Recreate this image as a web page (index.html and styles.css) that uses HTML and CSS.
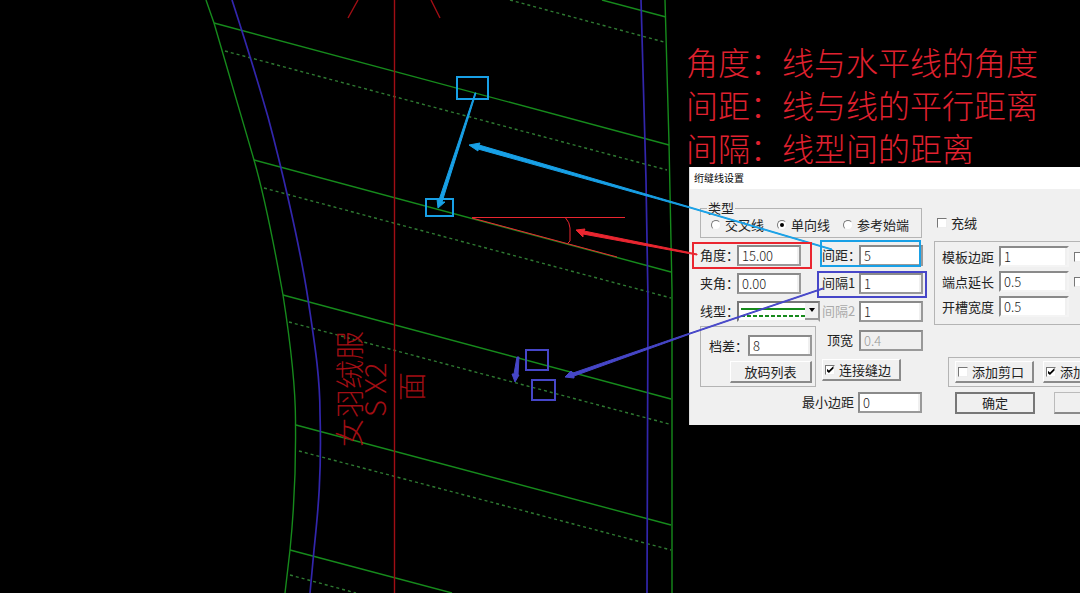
FILE: index.html
```html
<!DOCTYPE html>
<html lang="zh-CN">
<head>
<meta charset="utf-8">
<title>绗缝线设置</title>
<link rel="stylesheet" href="styles.css">
</head>
<body>
<main class="stage">
  <svg class="drawing" aria-hidden="true">
    <g class="seam">
      <path d="M206 0L214 23C234 92 244 125 254 160C266 202 275 250 283 295C290 340 296 385 295.500 425C296 470 293 520 290 550L285 593"/>
      <path d="M665 0L669 143L672 290V593"/>
      <path d="M602 0L666 17M214 23L669 145M254 160L671 272M283 295L671 399M296 425L671 525M290 550L452 593"/>
    </g>
    <path class="seam dashed" d="M510 0L664 42M225 51L667 170M264 188L671 298M289 322L669 424M299 451L671 550M290 575L356 593"/>
    <path class="edge" d="M232 0C245 40 258 82 268 117C279 158 299 240 308 299C314 340 320 375 320 413C322 480 317 520 314 550L310 593M641 0L646 180L648 300L647 593"/>
    <path class="axis" d="M394.500 0V593M358 0L348 18M431 0L440 18"/>
    <g class="piece-label">
      <text transform="translate(361 447) rotate(-90)">女羽绒服</text>
      <text transform="translate(386 417) rotate(-90)">S X2</text>
      <text transform="translate(423 401) rotate(-90)">面</text>
    </g>
  </svg>

  <div class="side">
    <section class="notes">
      <p>角度：线与水平线的角度</p>
      <p>间距：线与线的平行距离</p>
      <p>间隔：线型间的距离</p>
    </section>

    <form class="dialog">
      <h1 class="title">绗缝线设置</h1>
      <div class="body">
        <div class="main-col">
          <fieldset class="types">
            <legend>类型</legend>
            <label><input class="radio" type="radio" name="type">交叉线</label>
            <label><input class="radio" type="radio" name="type" checked>单向线</label>
            <label><input class="radio" type="radio" name="type">参考始端</label>
          </fieldset>
          <div class="pair">
            <div class="stack">
              <div class="row"><label class="name" for="angle">角度：</label><input class="field" id="angle" value="15.00"></div>
              <div class="row"><label class="name" for="clip">夹角：</label><input class="field" id="clip" value="0.00"></div>
              <div class="row"><label class="name" for="line">线型：</label>
                <div class="combo">
                  <svg class="sample" aria-hidden="true"><path d="M2 6H68"/><path class="dots" d="M2 13H68"/></svg>
                  <select class="select" id="line"><option aria-label="实线与虚线"></option></select>
                  <span class="drop"></span>
                </div>
              </div>
              <div class="group grade">
                <div class="grade-row"><label for="grade">档差：</label><input class="field" id="grade" value="8"></div>
                <button class="button" type="button">放码列表</button>
              </div>
            </div>
            <div class="stack">
              <div class="row"><label class="name" for="dist">间距：</label><input class="field" id="dist" value="5"></div>
              <div class="row"><label class="name" for="gap1">间隔1</label><input class="field" id="gap1" value="1"></div>
              <div class="row"><label class="name muted" for="gap2">间隔2</label><input class="field" id="gap2" value="1"></div>
              <div class="row tall"><label class="name indent" for="top">顶宽</label><input class="field" id="top" value="0.4" disabled></div>
              <div class="row tall"><label class="button check-button"><input class="check" type="checkbox" checked>连接缝边</label></div>
            </div>
          </div>
          <div class="row tall end"><label for="min">最小边距</label><input class="field" id="min" value="0"></div>
        </div>

        <div class="extra-col">
          <label class="fill"><input class="check" type="checkbox">充绒</label>
          <div class="group margins">
            <div class="row"><label for="m1">模板边距</label><input class="field wide" id="m1" value="1"><input class="check" type="checkbox" aria-label="模板边距选项"></div>
            <div class="row"><label for="m2">端点延长</label><input class="field wide" id="m2" value="0.5"><input class="check" type="checkbox" aria-label="端点延长选项"></div>
            <div class="row"><label for="m3">开槽宽度</label><input class="field wide" id="m3" value="0.5"></div>
          </div>
          <div class="group notches">
            <label class="button check-button"><input class="check" type="checkbox">添加剪口</label>
            <label class="button check-button"><input class="check" type="checkbox" checked>添加</label>
          </div>
          <div class="actions">
            <button class="button default" type="button">确定</button>
            <button class="button" type="button" aria-label="取消"></button>
          </div>
        </div>
      </div>
    </form>
  </div>

  <svg class="drawing marks" aria-hidden="true">
    <g class="cyan">
      <path class="box" d="M457 77H488V99H457ZM426 199H453V216H426Z"/>
      <path class="box" d="M821 241H920V266H821Z"/>
      <path d="M475 93L476 93L442 202L445 202L438 208L437 199L439 200Z"/>
      <path d="M469 145L480 143L479 145L690 207L832 249V250L690 208L478 149V151Z"/>
    </g>
    <g class="red">
      <path class="box" d="M693 243H811V268H693Z"/>
      <path class="thin" d="M472 217.500H625M472 218L617 257M565 217Q570 223 570 228V241L568 243"/>
      <path d="M576 230L585 229L584 231L697 254V255L583 234V237Z"/>
    </g>
    <g class="blue">
      <path class="box" d="M818 272H926V297H818ZM526 350H548V370H526ZM532 380H555V400H532Z"/>
      <path d="M565 377L571 371L573 373L690 333L823 288V289L690 334L574 376V378Z"/>
      <path d="M517 357H519L518 375H519L515 382L512 374H514Z"/>
    </g>
  </svg>
</main>
</body>
</html>
```

FILE: styles.css
```css
* { box-sizing: border-box; }
body {
  margin: 0;
  background: #000;
  color: #222;
  font: 400 13px/16px "Noto Sans CJK SC", sans-serif;
}
input, button, select { font: inherit; color: inherit; margin: 0; }

.stage {
  position: relative;
  min-height: 100vh;
  overflow: hidden;
}
.drawing {
  position: absolute;
  inset: 0;
  width: 100%;
  height: 100%;
  fill: none;
}
.marks { pointer-events: none; }
.seam { stroke: #168a1c; stroke-width: 1.4; }
.dashed { stroke: #2f7a32; stroke-dasharray: 3 3; }
.edge { stroke: #3226ac; stroke-width: 1.7; }
.axis { stroke: #a00e14; stroke-width: 1.4; }
.piece-label { fill: #a00e14; font-size: 29px; font-weight: 200; }

.cyan { fill: #18a0e6; stroke: #18a0e6; }
.red { fill: #ea2630; stroke: #ea2630; }
.blue { fill: #4646c8; stroke: #4646c8; }
.marks path { stroke-width: 1; }
.marks .box { fill: none; stroke-width: 2; }
.marks .thin { fill: none; }

.side { padding: 40px 0 0 689px; }
.notes {
  height: 127px;
  color: #e0212f;
  font-size: 32px;
  font-weight: 300;
  line-height: 43px;
  white-space: nowrap;
}
.notes p { margin: 0 0 0 -3px; }

.dialog {
  background: #f0f0f0;
  border-left: 1px solid #ddd;
  white-space: nowrap;
  overflow: hidden;
}
.title {
  margin: 0;
  padding-left: 4px;
  background: #fff;
  color: #000;
  font-size: 10px;
  font-weight: 400;
  line-height: 22px;
}
.body { display: flex; gap: 12px; padding: 11px 0 8px 10px; }
.main-col { flex: 0 0 222px; }
.extra-col { flex: 1 0 180px; }

.types {
  display: flex;
  align-items: center;
  gap: 13px;
  height: 38px;
  margin: 0 0 3px;
  padding: 0 0 4px 10px;
  border: 1px solid #b4b4b4;
}
.types legend { margin-left: -4px; padding: 0 1px; height: 16px; }
.types label, .fill, .check-button { display: flex; align-items: center; gap: 4px; }

.pair { display: grid; grid-template-columns: 122px 100px; }
.row { display: flex; align-items: center; height: 28px; }
.tall { height: 30px; }
.end { justify-content: flex-end; gap: 4px; }
.name { flex: 0 0 37px; min-width: 0; }
.indent { padding-left: 5px; }
.muted { color: #aaa; }

.field {
  width: 64px;
  height: 21px;
  padding: 0 3px;
  background: #fff;
  border: 2px solid #8a8a8a;
  border-color: #8a8a8a #999 #999 #8a8a8a;
  border-radius: 0;
  box-shadow: inset -2px 0 #f0f0f0;
  font-weight: 300;
}
.field:disabled { background: #f0f0f0; color: #999; }
.wide { width: 70px; border-right-color: #f4f4f4; border-bottom-color: #f4f4f4; }

.radio, .check {
  appearance: none;
  display: grid;
  place-items: center;
  flex: none;
  width: 10px;
  height: 10px;
  background: #fff;
  border: 1px solid;
  border-color: #777 #eee #eee #777;
}
.radio { border-radius: 50%; }
.radio:checked::after {
  content: "";
  width: 4px;
  height: 4px;
  border-radius: 50%;
  background: #000;
}
.check:checked::after {
  content: "";
  width: 7px;
  height: 7px;
  background: #000;
  clip-path: polygon(0 35%, 35% 65%, 100% 0, 100% 35%, 35% 100%, 0 70%);
}

.combo {
  display: grid;
  width: 83px;
  height: 21px;
  background: #fff;
  border: 2px solid;
  border-color: #777 #999 #eee #777;
}
.combo > * { grid-area: 1 / 1; }
.select { appearance: none; width: 100%; height: 17px; padding: 0; background: none; border: 0; }
.sample { width: 68px; height: 17px; fill: none; stroke: #168a1c; stroke-width: 2; }
.dots { stroke-dasharray: 4 2; }
.drop {
  display: grid;
  place-items: center;
  justify-self: end;
  width: 13px;
  background: #f0f0f0;
  border-bottom: 2px solid #999;
  pointer-events: none;
}
.drop::after { content: ""; border: 3px solid transparent; border-top: 4px solid #000; border-bottom: 0; }

.group { border: 1px solid #b4b4b4; }
.button {
  height: 22px;
  padding: 0 3px;
  background: #f0f0f0;
  border: 1px solid #fff;
  border-width: 1px 2px 2px 1px;
  border-color: #fff #8a8a8a #8a8a8a #fff;
  border-radius: 0;
}
.check-button { width: 79px; padding: 0 2px; }

.grade {
  display: flex;
  flex-direction: column;
  align-items: flex-end;
  gap: 5px;
  width: 116px;
  height: 61px;
  margin-top: 1px;
  padding: 8px 3px 0 8px;
}
.grade-row { display: flex; justify-content: space-between; align-items: center; width: 100%; }
.grade .button { width: 82px; }

.fill { height: 16px; margin: 15px 0 10px 3px; }
.margins { padding: 2px 0 5px 7px; border-right: 0; }
.margins .row { height: 25px; gap: 5px; }
.notches {
  display: flex;
  gap: 9px;
  margin: 32px 0 5px 14px;
  padding: 3px 0 3px 6px;
  border-right: 0;
}
.actions { display: flex; gap: 19px; margin-left: 21px; }
.actions .button { width: 80px; flex: none; border-left-color: #bbb; border-top-color: #bbb; }
.actions .default { border: 2px solid #777; }
```
